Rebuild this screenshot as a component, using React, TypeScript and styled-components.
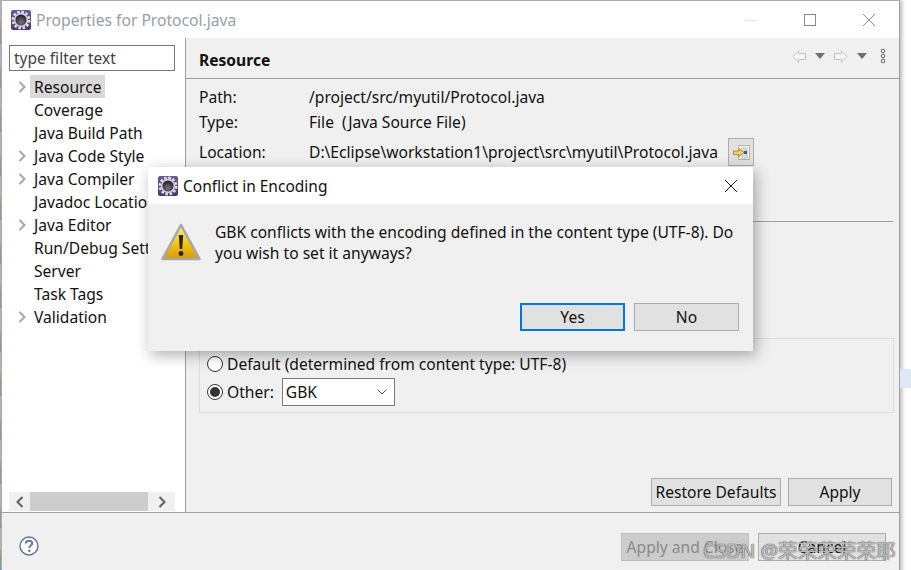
import React from "react";
import styled, { createGlobalStyle } from "styled-components";

const Global = createGlobalStyle`
  html, body {
    margin: 0;
    padding: 0;
    background: #fff;
  }
  * {
    box-sizing: border-box;
  }
`;

const FONT = `"Noto Sans", "Open Sans", "Liberation Sans", sans-serif`;

const Page = styled.div`
  position: relative;
  width: 911px;
  height: 570px;
  overflow: hidden;
  display: flex;
  background: #fff;
  font-family: ${FONT};
  font-size: 15.6px;
  color: #111;
`;
const EdgeStrip = styled.div`
  width: 1px;
  flex: none;
  background: repeating-linear-gradient(
    180deg,
    #b9b9b9 0 22px,
    #c9a26e 22px 26px,
    #9c9c9c 26px 40px,
    #6f9fd0 40px 44px
  );
`;
const Window = styled.div`
  width: 899px;
  flex: none;
  height: 590px;
  display: flex;
  flex-direction: column;
  border-top: 1px solid #ababab;
  border-left: 1px solid #ababab;
  border-right: 1px solid #a0a0a0;
  background: #f0f0f0;
  box-shadow: 2px 0 4px rgba(0, 0, 0, 0.28);
`;
const OutsideColumn = styled.div`
  flex: 1;
  padding-top: 369px;
`;
const OutsideHighlight = styled.div`
  height: 19px;
  background: #dfe8f5;
`;
const TitleBar = styled.div<{ $height: number }>`
  height: ${(p) => p.$height}px;
  flex: none;
  display: flex;
  align-items: center;
  background: #fff;
`;
const WindowTitle = styled.div`
  margin-left: 5px;
  font-size: 15.65px;
  color: #97a0aa;
`;
const WindowControls = styled.div`
  margin-left: auto;
  display: flex;
  align-items: center;
  gap: 47px;
  padding-right: 24px;
`;
const Body = styled.div`
  height: 474px;
  flex: none;
  display: flex;
`;
const Nav = styled.div`
  width: 184px;
  flex: none;
  display: flex;
  flex-direction: column;
  padding: 7px 10px 0 7px;
  background: #fff;
  border-right: 1px solid #a0a0a0;
`;
const FilterInput = styled.div`
  height: 26px;
  flex: none;
  display: flex;
  align-items: center;
  padding-left: 4px;
  border: 1px solid #7a7a7a;
  font-size: 15.5px;
  color: #444;
`;
const Tree = styled.div`
  flex: 1;
  padding-top: 4px;
  overflow: hidden;
`;
const TreeRow = styled.div`
  height: 23px;
  display: flex;
  align-items: center;
  white-space: nowrap;
`;
const TreeArrow = styled.div`
  width: 21px;
  flex: none;
  display: flex;
  padding-left: 9px;
`;
const TreeLabel = styled.div<{ $selected?: boolean }>`
  height: 23px;
  display: flex;
  align-items: center;
  padding: 0 4px;
  background: ${(p) => (p.$selected ? "#d9d9d9" : "transparent")};
`;
const HScrollBar = styled.div`
  height: 19px;
  flex: none;
  display: flex;
  align-items: center;
  margin-bottom: 1px;
  background: #f0f0f0;
`;
const ScrollButton = styled.div<{ $width: number }>`
  width: ${(p) => p.$width}px;
  flex: none;
  display: flex;
  justify-content: center;
`;
const ScrollThumb = styled.div`
  flex: 1;
  height: 19px;
  background: #cdcdcd;
`;
const Pane = styled.div`
  flex: 1;
  min-width: 0;
  display: flex;
  flex-direction: column;
`;
const PaneHeader = styled.div`
  height: 41px;
  flex: none;
  display: flex;
  align-items: center;
  padding: 0 13px 0 13px;
  border-bottom: 1px solid #a0a0a0;
`;
const PaneTitle = styled.div`
  margin-top: 4px;
  font-size: 15.6px;
  font-weight: 700;
  margin-right: auto;
`;
const HeaderTools = styled.div`
  display: flex;
  align-items: center;
  gap: 9px;
  margin-bottom: 4px;
`;
const InfoGrid = styled.div`
  padding: 5px 0 0 13px;
`;
const InfoRow = styled.div<{ $height: number }>`
  height: ${(p) => p.$height}px;
  display: flex;
  align-items: center;
  white-space: nowrap;
`;
const InfoLabel = styled.div`
  width: 110px;
  flex: none;
`;
const LocationButton = styled.div`
  width: 26px;
  height: 28px;
  margin-left: 10px;
  display: flex;
  align-items: center;
  justify-content: center;
  background: #e1e1e1;
  border: 1px solid #adadad;
`;
const PaneRule = styled.div`
  height: 1px;
  flex: none;
  margin: 51px 6px 0 0;
  background: #a0a0a0;
`;
const EncodingGroup = styled.div`
  height: 75px;
  flex: none;
  display: flex;
  flex-direction: column;
  margin: 116px 5px 0 13px;
  padding: 11px 0 0 7px;
  border: 1px solid #dcdcdc;
`;
const RadioRow = styled.div<{ $height: number }>`
  height: ${(p) => p.$height}px;
  display: flex;
  align-items: center;
  gap: 4px;
  white-space: nowrap;
`;
const RadioDot = styled.div<{ $checked?: boolean }>`
  width: 16px;
  height: 16px;
  flex: none;
  display: flex;
  align-items: center;
  justify-content: center;
  border: 1px solid #333;
  border-radius: 50%;
  background: #fff;
  &::after {
    content: "";
    width: 10px;
    height: 10px;
    border-radius: 50%;
    background: ${(p) => (p.$checked ? "#333" : "transparent")};
  }
`;
const SelectBox = styled.div`
  width: 113px;
  height: 28px;
  margin-left: 4px;
  display: flex;
  align-items: center;
  justify-content: space-between;
  padding: 0 7px 0 3px;
  background: #fff;
  border: 1px solid #7a7a7a;
`;
const ButtonRow = styled.div<{ $gap: number; $top: number; $right: number }>`
  display: flex;
  justify-content: flex-end;
  gap: ${(p) => p.$gap}px;
  margin-top: ${(p) => p.$top}px;
  padding-right: ${(p) => p.$right}px;
`;
const Button = styled.div<{ $width: number; $focused?: boolean; $disabled?: boolean }>`
  width: ${(p) => p.$width}px;
  height: 28px;
  flex: none;
  display: flex;
  align-items: center;
  justify-content: center;
  white-space: nowrap;
  background: ${(p) => (p.$disabled ? "#cccccc" : "#e1e1e1")};
  color: ${(p) => (p.$disabled ? "#8a8a8a" : "#111")};
  border: ${(p) =>
    p.$focused
      ? "2px solid #0078d7"
      : p.$disabled
      ? "1px solid #bfbfbf"
      : "1px solid #adadad"};
`;
const Footer = styled.div`
  flex: 1;
  display: flex;
  align-items: flex-start;
  border-top: 1px solid #a0a0a0;
`;
const HelpSlot = styled.div`
  width: 26px;
  margin: 23px 0 0 17px;
  display: flex;
`;
const FooterButtons = styled.div`
  margin-left: auto;
  padding: 20px 13px 0 0;
  display: flex;
  gap: 9px;
`;
const Dialog = styled.div`
  position: absolute;
  left: 148px;
  top: 167px;
  width: 605px;
  height: 184px;
  display: flex;
  flex-direction: column;
  background: #f0f0f0;
  box-shadow: 3px 4px 14px rgba(0, 0, 0, 0.32);
`;
const DialogTitle = styled.div`
  margin-left: 5px;
  font-size: 15.5px;
  color: #111;
`;
const DialogClose = styled.div`
  margin-left: auto;
  display: flex;
  padding-right: 16px;
`;
const DialogMessage = styled.div`
  display: flex;
  padding: 18px 0 0 13px;
  height: 99px;
  flex: none;
`;
const IconSlot = styled.div`
  margin-top: 1px;
  flex: none;
  display: flex;
`;
const MessageText = styled.div`
  width: 530px;
  margin-left: 14px;
  line-height: 21px;
`;
const Watermark = styled.div`
  position: absolute;
  left: 703px;
  top: 535px;
  font-size: 19.6px;
  white-space: nowrap;
  color: rgba(255, 255, 255, 0.65);
  text-shadow: 0 0 1px rgba(70, 70, 70, 0.95), 0 0 1px rgba(70, 70, 70, 0.95);
  font-family: ${FONT}, "Noto Sans CJK SC";
`;
const Spacer = styled.span<{ $width: number }>`
  width: ${(p) => p.$width}px;
  flex: none;
`;

const GearIcon = ({ id }: { id: string }) => (
  <svg width="20" height="20" viewBox="0 0 20 20" style={{ flex: "none" }}>
    <defs>
      <linearGradient id={`${id}Bg`} x1="0" y1="0" x2="0" y2="1">
        <stop offset="0" stopColor="#6a5a9c" />
        <stop offset="1" stopColor="#463670" />
      </linearGradient>
      <radialGradient id={`${id}Hole`} cx="0.5" cy="0.7" r="0.7">
        <stop offset="0" stopColor="#77718a" />
        <stop offset="1" stopColor="#1e1b26" />
      </radialGradient>
    </defs>
    <rect width="20" height="20" rx="2" fill={`url(#${id}Bg)`} />
    <circle cx="10" cy="10" r="8.2" fill="none" stroke="#e4e4e4" strokeWidth="2.4" strokeDasharray="2.6 1.7" />
    <circle cx="10" cy="10" r="7.2" fill="#d4d4d4" />
    <circle cx="10" cy="10" r="5.6" fill={`url(#${id}Hole)`} />
  </svg>
);

const WarningIcon = () => (
  <svg width="40" height="38" viewBox="0 0 40 38" style={{ flex: "none" }}>
    <defs>
      <linearGradient id="warnFill" x1="0" y1="0" x2="0" y2="1">
        <stop offset="0" stopColor="#fdf19a" />
        <stop offset="0.45" stopColor="#f5cf1a" />
        <stop offset="1" stopColor="#d89a06" />
      </linearGradient>
    </defs>
    <path d="M20 2 L38.5 36 H1.5 Z" fill="url(#warnFill)" stroke="#a8a8a8" strokeWidth="2.6" strokeLinejoin="round" />
    <path d="M17.8 12 H22.2 L21.2 26 H18.8 Z" fill="#2a2418" />
    <circle cx="20" cy="30.5" r="2.4" fill="#2a2418" />
  </svg>
);

const Cross = ({ color, size }: { color: string; size: number }) => (
  <svg width={size} height={size} viewBox="0 0 12 12">
    <path d="M0 0 L12 12 M12 0 L0 12" stroke={color} strokeWidth="1" fill="none" />
  </svg>
);

const Chevron = ({ left, color }: { left?: boolean; color: string }) => (
  <svg width="8" height="12" viewBox="0 0 8 12">
    <path d={left ? "M6.5 1 L1.5 6 L6.5 11" : "M1.5 1 L6.5 6 L1.5 11"} stroke={color} strokeWidth="2" fill="none" />
  </svg>
);

const NavArrow = ({ flip }: { flip?: boolean }) => (
  <svg width="14" height="13" viewBox="0 0 14 13" style={flip ? { transform: "scaleX(-1)" } : undefined}>
    <path d="M0.7 6.5 L6.5 0.7 V3.5 H13.5 V9.5 H6.5 V12.3 Z" fill="#f4f4f4" stroke="#c4c4c4" strokeWidth="1" />
  </svg>
);

const DropTriangle = () => (
  <svg width="10" height="6" viewBox="0 0 10 6">
    <path d="M0 0 H10 L5 6 Z" fill="#6e6e6e" />
  </svg>
);

const MoreDots = () => (
  <svg width="6" height="16" viewBox="0 0 6 16" style={{ marginLeft: 4 }}>
    <circle cx="3" cy="3" r="1.8" fill="none" stroke="#666" strokeWidth="1" />
    <circle cx="3" cy="8" r="1.8" fill="none" stroke="#666" strokeWidth="1" />
    <circle cx="3" cy="13" r="1.8" fill="none" stroke="#666" strokeWidth="1" />
  </svg>
);

const LocationIcon = () => (
  <svg width="17" height="15" viewBox="0 0 17 15">
    <rect x="5.5" y="0.5" width="11" height="14" fill="#f3f5f8" stroke="#c9b27a" />
    <path d="M8 3 H15 M8 5 H15 M10 7 H15 M10 9 H15 M8 11 H15 M8 13 H15" stroke="#a9bdd8" strokeWidth="1" />
    <rect x="11" y="6" width="3" height="3" fill="#2f5f99" />
    <path d="M0.5 6 H6 V3.5 L11 7.5 L6 11.5 V9.5 H0.5 Z" fill="#f3cf70" stroke="#b98a25" strokeWidth="1" />
  </svg>
);

const SelectArrow = () => (
  <svg width="10" height="6" viewBox="0 0 10 6">
    <path d="M0.5 0.5 L5 5 L9.5 0.5" stroke="#555" fill="none" />
  </svg>
);

const HelpIcon = () => (
  <svg width="20" height="20" viewBox="0 0 20 20">
    <circle cx="10" cy="10" r="9" fill="#fbfbfd" stroke="#5d7399" strokeWidth="1.4" />
    <path
      d="M6.8 7.6 C6.8 5.6 8.3 4.8 10 4.8 C11.9 4.8 13.2 5.9 13.2 7.4 C13.2 9.5 10.3 9.6 10.3 11.9"
      stroke="#6f7a8c"
      strokeWidth="2"
      fill="none"
    />
    <circle cx="10.3" cy="14.8" r="1.3" fill="#6f7a8c" />
  </svg>
);

const treeItems = [
  { label: "Resource", arrow: true, selected: true },
  { label: "Coverage" },
  { label: "Java Build Path" },
  { label: "Java Code Style", arrow: true },
  { label: "Java Compiler", arrow: true },
  { label: "Javadoc Location" },
  { label: "Java Editor", arrow: true },
  { label: "Run/Debug Settings" },
  { label: "Server" },
  { label: "Task Tags" },
  { label: "Validation", arrow: true },
];

const App = () => {
  return (
    <Page>
      <Global />
      <EdgeStrip />
      <Window>
        <TitleBar $height={37}>
          <Spacer $width={9} />
          <GearIcon id="mainGear" />
          <WindowTitle>Properties for Protocol.java</WindowTitle>
          <WindowControls>
            <svg width="12" height="12" viewBox="0 0 12 12">
              <path d="M0 6.5 H12" stroke="#e2e2e2" />
            </svg>
            <svg width="12" height="12" viewBox="0 0 12 12">
              <rect x="0.5" y="0.5" width="11" height="11" fill="none" stroke="#8a8a8a" />
            </svg>
            <Cross color="#8a8a8a" size={12} />
          </WindowControls>
        </TitleBar>
        <Body>
          <Nav>
            <FilterInput>type filter text</FilterInput>
            <Tree>
              {treeItems.map((item) => (
                <TreeRow key={item.label}>
                  <TreeArrow>{item.arrow && <Chevron color="#a6a6a6" />}</TreeArrow>
                  <TreeLabel $selected={item.selected}>{item.label}</TreeLabel>
                </TreeRow>
              ))}
            </Tree>
            <HScrollBar>
              <ScrollButton $width={21}>
                <Chevron left color="#606060" />
              </ScrollButton>
              <ScrollThumb />
              <ScrollButton $width={27}>
                <Chevron color="#606060" />
              </ScrollButton>
            </HScrollBar>
          </Nav>
          <Pane>
            <PaneHeader>
              <PaneTitle>Resource</PaneTitle>
              <HeaderTools>
                <NavArrow />
                <DropTriangle />
                <NavArrow flip />
                <DropTriangle />
                <MoreDots />
              </HeaderTools>
            </PaneHeader>
            <InfoGrid>
              <InfoRow $height={25}>
                <InfoLabel>Path:</InfoLabel>/project/src/myutil/Protocol.java
              </InfoRow>
              <InfoRow $height={25}>
                <InfoLabel>Type:</InfoLabel>File&nbsp; (Java Source File)
              </InfoRow>
              <InfoRow $height={36}>
                <InfoLabel>Location:</InfoLabel>D:\Eclipse\workstation1\project\src\myutil\Protocol.java
                <LocationButton>
                  <LocationIcon />
                </LocationButton>
              </InfoRow>
            </InfoGrid>
            <PaneRule />
            <EncodingGroup>
              <RadioRow $height={28}>
                <RadioDot />
                Default (determined from content type: UTF-8)
              </RadioRow>
              <RadioRow $height={28}>
                <RadioDot $checked />
                Other:
                <SelectBox>
                  GBK
                  <SelectArrow />
                </SelectBox>
              </RadioRow>
            </EncodingGroup>
            <ButtonRow $gap={7} $top={65} $right={7}>
              <Button $width={130}>Restore Defaults</Button>
              <Button $width={104}>Apply</Button>
            </ButtonRow>
          </Pane>
        </Body>
        <Footer>
          <HelpSlot>
            <HelpIcon />
          </HelpSlot>
          <FooterButtons>
            <Button $width={128} $disabled>
              Apply and Close
            </Button>
            <Button $width={128}>Cancel</Button>
          </FooterButtons>
        </Footer>
      </Window>
      <OutsideColumn>
        <OutsideHighlight />
      </OutsideColumn>
      <Dialog>
        <TitleBar $height={37}>
          <Spacer $width={10} />
          <GearIcon id="dialogGear" />
          <DialogTitle>Conflict in Encoding</DialogTitle>
          <DialogClose>
            <Cross color="#222" size={12} />
          </DialogClose>
        </TitleBar>
        <DialogMessage>
          <IconSlot>
            <WarningIcon />
          </IconSlot>
          <MessageText>
            GBK conflicts with the encoding defined in the content type (UTF-8). Do you wish to set it anyways?
          </MessageText>
        </DialogMessage>
        <ButtonRow $gap={9} $top={0} $right={14}>
          <Button $width={105} $focused>
            Yes
          </Button>
          <Button $width={105}>No</Button>
        </ButtonRow>
      </Dialog>
      <Watermark>CSDN @荣荣荣荣荣耶</Watermark>
    </Page>
  );
};

export default App;
